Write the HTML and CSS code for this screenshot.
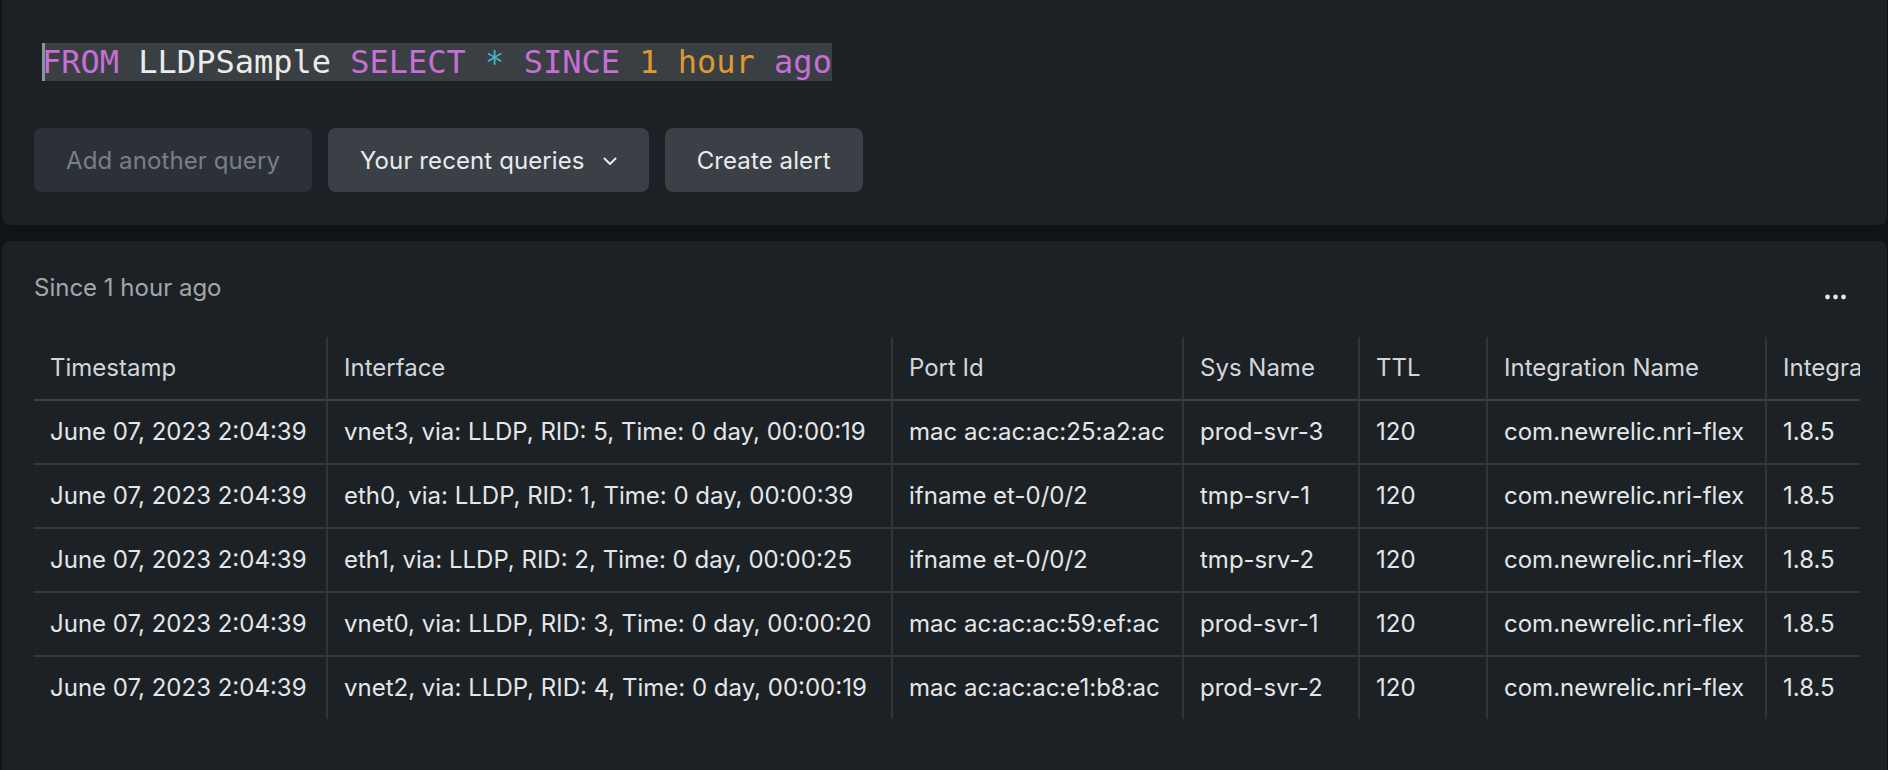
FILE: index.html
```html
<!DOCTYPE html>
<html lang="en">
<head>
<meta charset="utf-8">
<title>LLDPSample query</title>
<link rel="stylesheet" href="styles.css">
</head>
<body>
<div class="page">
  <section class="query-panel">
    <div class="query-line">
      <span class="query"><span class="cursor"></span><span class="kw">FROM</span> <span class="ident">LLDPSample</span> <span class="kw">SELECT</span> <span class="op">*</span> <span class="kw">SINCE</span> <span class="num">1 hour</span> <span class="kw">ago</span></span>
    </div>
    <div class="actions">
      <button class="btn btn-muted" type="button">Add another query</button>
      <button class="btn" type="button">Your recent queries
        <svg class="chevron" width="14" height="9" viewBox="0 0 14 9" aria-hidden="true"><polyline points="1.5,1.5 7,7 12.5,1.5" fill="none" stroke="currentColor" stroke-width="2" stroke-linecap="round" stroke-linejoin="round"/></svg>
      </button>
      <button class="btn" type="button">Create alert</button>
    </div>
  </section>

  <section class="result-panel">
    <div class="result-head">
      <span class="since">Since 1 hour ago</span>
      <button class="more" type="button" aria-label="More">
        <svg width="22" height="6" viewBox="0 0 22 6" aria-hidden="true"><circle cx="2.5" cy="3" r="2.4" fill="currentColor"/><circle cx="10.5" cy="3" r="2.4" fill="currentColor"/><circle cx="18.5" cy="3" r="2.4" fill="currentColor"/></svg>
      </button>
    </div>
    <div class="table-wrap">
      <table class="data">
        <thead>
          <tr>
            <th class="c1">Timestamp</th>
            <th class="c2">Interface</th>
            <th class="c3">Port Id</th>
            <th class="c4">Sys Name</th>
            <th class="c5">TTL</th>
            <th class="c6">Integration Name</th>
            <th class="c7">Integration Version</th>
          </tr>
        </thead>
        <tbody>
          <tr>
            <td>June 07, 2023 2:04:39</td>
            <td>vnet3, via: LLDP, RID: 5, Time: 0 day, 00:00:19</td>
            <td>mac ac:ac:ac:25:a2:ac</td>
            <td>prod-svr-3</td>
            <td>120</td>
            <td>com.newrelic.nri-flex</td>
            <td>1.8.5</td>
          </tr>
          <tr>
            <td>June 07, 2023 2:04:39</td>
            <td>eth0, via: LLDP, RID: 1, Time: 0 day, 00:00:39</td>
            <td>ifname et-0/0/2</td>
            <td>tmp-srv-1</td>
            <td>120</td>
            <td>com.newrelic.nri-flex</td>
            <td>1.8.5</td>
          </tr>
          <tr>
            <td>June 07, 2023 2:04:39</td>
            <td>eth1, via: LLDP, RID: 2, Time: 0 day, 00:00:25</td>
            <td>ifname et-0/0/2</td>
            <td>tmp-srv-2</td>
            <td>120</td>
            <td>com.newrelic.nri-flex</td>
            <td>1.8.5</td>
          </tr>
          <tr>
            <td>June 07, 2023 2:04:39</td>
            <td>vnet0, via: LLDP, RID: 3, Time: 0 day, 00:00:20</td>
            <td>mac ac:ac:ac:59:ef:ac</td>
            <td>prod-svr-1</td>
            <td>120</td>
            <td>com.newrelic.nri-flex</td>
            <td>1.8.5</td>
          </tr>
          <tr>
            <td>June 07, 2023 2:04:39</td>
            <td>vnet2, via: LLDP, RID: 4, Time: 0 day, 00:00:19</td>
            <td>mac ac:ac:ac:e1:b8:ac</td>
            <td>prod-svr-2</td>
            <td>120</td>
            <td>com.newrelic.nri-flex</td>
            <td>1.8.5</td>
          </tr>
        </tbody>
      </table>
    </div>
  </section>
</div>
</body>
</html>
```

FILE: styles.css
```css
* {
  box-sizing: border-box;
}

html, body {
  margin: 0;
  padding: 0;
  height: 100%;
  overflow: hidden;
  background: #111416;
}

body {
  font-family: Inter, "Noto Sans", "Liberation Sans", sans-serif;
  color: #e4e6e8;
}

.page {
  display: flex;
  flex-direction: column;
  gap: 16px;
  height: 100vh;
  padding: 0 1px 0 2px;
}

/* ---------- query panel ---------- */
.query-panel {
  background: #1c2125;
  border-radius: 0 0 8px 8px;
  padding: 43px 40px 33px 32px;
}

.query-line {
  padding-left: 8px;
  height: 38px;
}

.query {
  position: relative;
  display: inline-block;
  font-family: "DejaVu Sans Mono", "Liberation Mono", monospace;
  font-size: 32px;
  line-height: 38px;
  background: #3a3f44;
  color: #e6e6e6;
  white-space: pre;
}

.cursor {
  position: absolute;
  left: 0;
  top: 0;
  width: 3px;
  height: 100%;
  background: #8d9297;
}

.kw { color: #c66fd6; }
.ident { color: #ebebeb; }
.op { color: #47b3c2; }
.num { color: #df992f; }

.actions {
  display: flex;
  gap: 16px;
  margin-top: 47px;
}

.btn {
  display: inline-flex;
  align-items: center;
  height: 64px;
  padding: 0 32px;
  border: 0;
  border-radius: 8px;
  background: #3a4046;
  color: #e9ebed;
  font-family: Inter, "Noto Sans", sans-serif;
  font-size: 24px;
  letter-spacing: 0.1px;
  cursor: pointer;
}

.btn-muted {
  background: #2c3137;
  color: #7a7f86;
}

.chevron {
  margin-left: 18px;
  margin-top: 2px;
}

/* ---------- result panel ---------- */
.result-panel {
  flex: 1;
  background: #1c2125;
  border-radius: 8px 8px 0 0;
  padding: 32px 27px 0 32px;
  overflow: hidden;
}

.result-head {
  display: flex;
  justify-content: space-between;
  align-items: flex-start;
}

.since {
  font-size: 24px;
  line-height: 29px;
  color: #a2a7ac;
}

.more {
  display: flex;
  align-items: center;
  justify-content: center;
  width: 48px;
  height: 40px;
  margin-top: 4px;
  padding: 0;
  border: 0;
  background: transparent;
  color: #e3e5e8;
}

.table-wrap {
  margin-top: 20px;
  overflow: hidden;
}

.data {
  border-collapse: separate;
  border-spacing: 0;
  table-layout: fixed;
  width: 1991px;
  font-size: 24px;
}

.data th,
.data td {
  padding: 0 16px;
  line-height: 62px;
  text-align: left;
  white-space: nowrap;
  overflow: hidden;
  border-bottom: 2px solid #32383c;
  border-left: 2px solid #30363a;
}

.data th:first-child,
.data td:first-child {
  border-left: 0;
}

.data th {
  font-weight: 400;
  color: #d3d6d9;
  border-bottom-color: #3a4145;
}

.data tbody tr:last-child td {
  border-bottom: 0;
}

.c1 { width: 292px; }
.c2 { width: 565px; }
.c3 { width: 291px; }
.c4 { width: 176px; }
.c5 { width: 128px; }
.c6 { width: 279px; }
.c7 { width: 260px; }
```
